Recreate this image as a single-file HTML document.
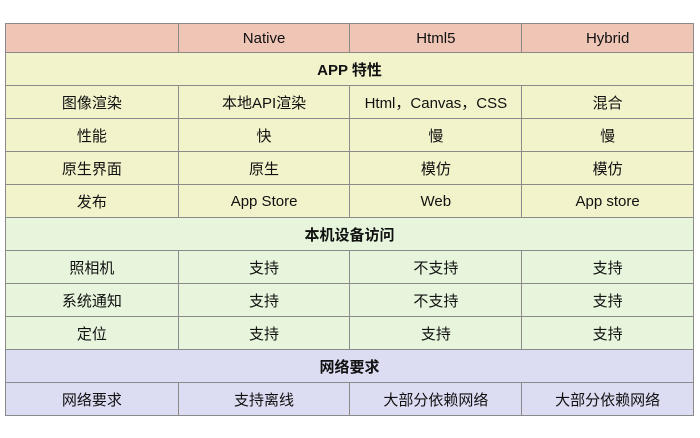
<!DOCTYPE html><html><head><style>
body{margin:0;width:700px;height:438px;background:#fff;font-family:"Liberation Sans","Noto Sans CJK SC",sans-serif;}
table{position:absolute;left:5px;top:23px;border-collapse:collapse;width:689px;}
td{border:1px solid #8a8a8a;height:32px;padding:0;text-align:center;font-size:15px;color:#111;}
tr.h td{height:28px;background:#efc5b5;}
tr.y td{background:#f2f2cb;}
tr.g td{background:#e6f5dc;}
tr.p td{background:#dcdcf3;}
td.s{font-weight:bold;}
</style></head><body>
<table>
<colgroup><col style="width:173px"><col style="width:172px"><col style="width:172px"><col style="width:172px"></colgroup>
<tr class="h"><td></td><td>Native</td><td>Html5</td><td>Hybrid</td></tr>
<tr class="y"><td colspan="4" class="s">APP 特性</td></tr>
<tr class="y"><td>图像渲染</td><td>本地API渲染</td><td>Html，Canvas，CSS</td><td>混合</td></tr>
<tr class="y"><td>性能</td><td>快</td><td>慢</td><td>慢</td></tr>
<tr class="y"><td>原生界面</td><td>原生</td><td>模仿</td><td>模仿</td></tr>
<tr class="y"><td>发布</td><td>App Store</td><td>Web</td><td>App store</td></tr>
<tr class="g"><td colspan="4" class="s">本机设备访问</td></tr>
<tr class="g"><td>照相机</td><td>支持</td><td>不支持</td><td>支持</td></tr>
<tr class="g"><td>系统通知</td><td>支持</td><td>不支持</td><td>支持</td></tr>
<tr class="g"><td>定位</td><td>支持</td><td>支持</td><td>支持</td></tr>
<tr class="p"><td colspan="4" class="s">网络要求</td></tr>
<tr class="p"><td>网络要求</td><td>支持离线</td><td>大部分依赖网络</td><td>大部分依赖网络</td></tr>
</table>
</body></html>
